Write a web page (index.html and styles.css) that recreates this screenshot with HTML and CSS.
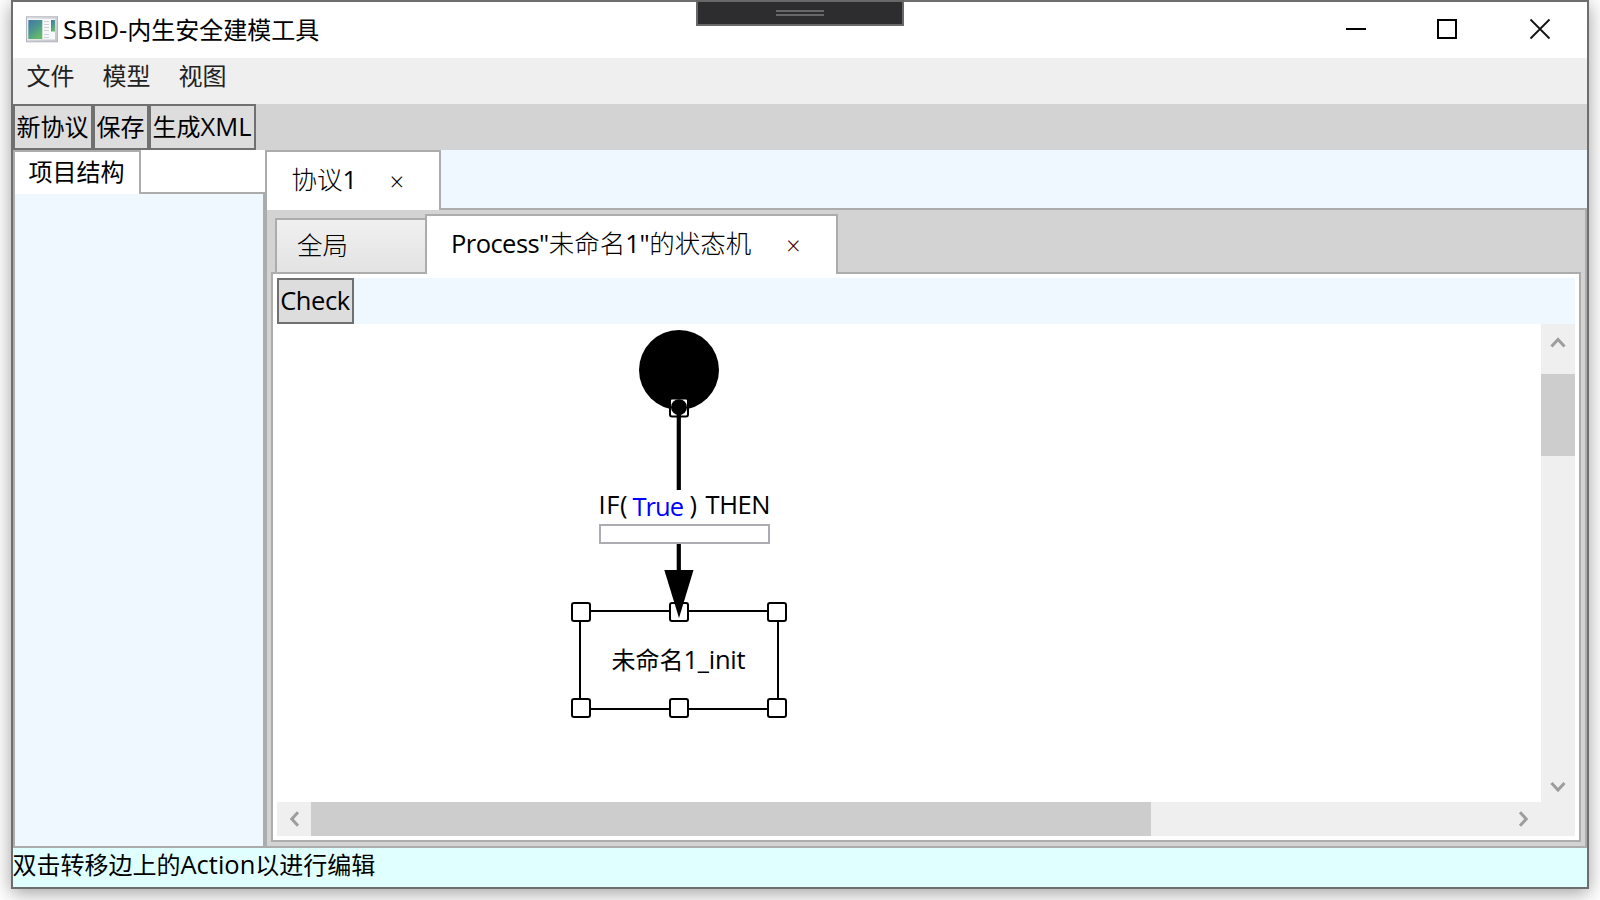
FILE: index.html
```html
<!DOCTYPE html>
<html lang="zh-CN">
<head>
<meta charset="utf-8">
<title>SBID</title>
<link rel="stylesheet" href="styles.css">
</head>
<body>
<div class="window">
  <header class="titlebar">
    <svg class="app-icon" width="32" height="28" viewBox="0 0 32 28">
      <defs>
        <linearGradient id="ig" x1="0" y1="0" x2=".6" y2="1"><stop offset="0" stop-color="#4677a4"/><stop offset=".5" stop-color="#4a9590"/><stop offset="1" stop-color="#68b96b"/></linearGradient>
        <linearGradient id="fr" x1="0" y1="0" x2="1" y2="1"><stop offset="0" stop-color="#e8eaee"/><stop offset="1" stop-color="#c3c5ca"/></linearGradient>
      </defs>
      <rect x=".5" y=".8" width="31" height="25" fill="url(#fr)" stroke="#b1b5bc"/>
      <rect x="1.500" y="3" width="27.500" height="20.500" fill="#f7f8f9"/>
      <rect x="2.300" y="4" width="14" height="19" fill="url(#ig)"/>
      <rect x="25" y="4" width="4" height="11.500" fill="url(#ig)"/>
      <path d="M18 5.500h5M18 8.500h5M18 11.500h5M18 14.500h5M18 18.500h5M18 21.500h5" stroke="#cfd1d6" stroke-width="1.200"/>
    </svg>
    <span class="title"><span class="la la-title">SBID-</span>内生安全建模工具</span>
    <div class="grip"><i></i><i></i></div>
    <svg class="winctl" width="210" height="30" viewBox="0 0 210 30">
      <path d="M2 15h20" stroke="#000" stroke-width="2"/>
      <rect x="94" y="6" width="18" height="18" fill="none" stroke="#000" stroke-width="2"/>
      <path d="M186.500 5.500l19 19M205.500 5.500l-19 19" stroke="#111" stroke-width="1.800"/>
    </svg>
  </header>
  <nav class="menu"><span>文件</span><span>模型</span><span>视图</span></nav>
  <div class="toolbar">
    <button class="btn b1">新协议</button><button class="btn b2">保存</button><button class="btn b3">生成<span class="la la-xml">XML</span></button>
  </div>
  <main class="main">
    <aside class="side">
      <div class="side-head"><div class="side-tab">项目结构</div></div>
      <div class="side-body"></div>
    </aside>
    <section class="docs">
      <div class="doc-head"><div class="doc-tab"><span class="big">协议<span class="la">1</span></span><span class="x">×</span></div><div class="doc-fill"></div></div>
      <div class="doc-body">
        <div class="tabs">
          <div class="tab"><span class="big all">全局</span></div>
          <div class="tab sel"><span class="big"><span class="la la-proc">Process"</span>未命名<span class="la la-q">1"</span>的状态机</span><span class="x">×</span></div>
        </div>
        <div class="pane">
          <div class="pane-bar"><button class="btn check"><span class="la la-check">Check</span></button></div>
          <div class="view">
            <div class="canvas">
              <svg class="graph" width="1264" height="478" viewBox="277 324 1264 478">
                <circle cx="679" cy="370" r="40"/>
                <rect class="port" x="670" y="398.500" width="18" height="18" rx="2"/>
                <circle cx="679" cy="407.200" r="8"/>
                <path d="M678.800 407V572" stroke="#000" stroke-width="4.200"/>
                <rect x="598" y="490" width="173" height="54" fill="#fff"/>
                <rect x="600" y="525" width="169" height="18" fill="#fff" stroke="#acacb2" stroke-width="2"/>
                <rect x="580" y="611" width="198" height="98" fill="#fff" stroke="#000" stroke-width="2"/>
                <rect class="port" x="572" y="603" width="18" height="18" rx="2"/>
                <rect class="port" x="670" y="603" width="18" height="18" rx="2"/>
                <rect class="port" x="768" y="603" width="18" height="18" rx="2"/>
                <rect class="port" x="572" y="699" width="18" height="18" rx="2"/>
                <rect class="port" x="670" y="699" width="18" height="18" rx="2"/>
                <rect class="port" x="768" y="699" width="18" height="18" rx="2"/>
                <path d="M664.300 570h29.200L679 618z"/>
                <text class="gt" x="598.500" y="514" textLength="29">IF(</text>
                <text class="gt blue" x="632.500" y="516" textLength="51.500">True</text>
                <text class="gt" x="689.500" y="514" textLength="8">)</text>
                <text class="gt" x="705.500" y="514" textLength="65">THEN</text>
                <text class="gc" x="611.500" y="669">未命名</text>
                <text class="gt" x="683.500" y="669" textLength="62">1_init</text>
              </svg>
            </div>
            <div class="vbar">
              <svg width="34" height="50" viewBox="0 0 34 50"><path d="M10.500 22.500l6.500-7 6.500 7"/></svg>
              <div class="vthumb"></div>
              <svg class="end" width="34" height="34" viewBox="0 0 34 34"><path d="M10.500 15l6.500 7 6.500-7"/></svg>
            </div>
          </div>
          <div class="hbar">
            <svg width="34" height="34" viewBox="0 0 34 34"><path d="M21 10.200l-6.200 6.800 6.200 6.800"/></svg>
            <div class="hthumb"></div>
            <svg class="endh" width="34" height="34" viewBox="0 0 34 34"><path d="M13 10.200l6.200 6.800-6.200 6.800"/></svg>
          </div>
        </div>
      </div>
    </section>
  </main>
  <footer class="status">双击转移边上的<span class="la la-act">Action</span>以进行编辑</footer>
</div>
</body>
</html>
```
FILE: styles.css
```css
* { box-sizing: border-box; }
html, body { margin: 0; height: 100%; overflow: hidden; }
body {
  background: #fff;
  font-family: "Noto Sans CJK SC", sans-serif;
  font-size: 24px;
  color: #000;
  padding: 0 11px 11px;
}
.window {
  height: 889px;
  border: 2px solid #6e6e6e;
  box-shadow: 0 4px 18px rgba(0,0,0,.38);
  display: flex;
  flex-direction: column;
  background: #fff;
  white-space: nowrap;
}
.la { font-family: "Open Sans", "Noto Sans", sans-serif; font-size: 25.5px; line-height: 1; letter-spacing: -.4px; }
.la-title { letter-spacing: 0; }
.la-xml { letter-spacing: 0; }
.la-act { letter-spacing: 0; }
.titlebar { height: 56px; display: flex; align-items: center; padding: 0 16px 0 13px; position: relative; }
.app-icon { margin: 0 5px 0 0; }
.title { line-height: 53px; height: 56px; }
.grip {
  position: absolute; left: 683px; top: -2px; width: 208px; height: 26px;
  background: #2d2d30; border: 2px solid #686868;
  display: flex; flex-direction: column; align-items: center; gap: 2px; padding-top: 8px;
}
.grip i { width: 48px; height: 2px; background: #686868; }
.winctl { margin-left: auto; margin-right: 17px; margin-bottom: 2px; }
.menu { height: 46px; background: #efefef; display: flex; gap: 28px; padding-left: 13.5px; line-height: 33px; color: #222; }
.toolbar { height: 46px; background: #d3d3d3; display: flex; }
.btn {
  font: inherit; color: #000; background: #ddd; border: 2px solid #707070; border-radius: 0;
  height: 46px; padding: 0 1px 2px 0; margin: 0; line-height: 40px; text-align: center; white-space: nowrap;
}
.b1 { width: 80px; }
.b2 { width: 56px; }
.b3 { width: 107px; }
.check { width: 77px; }
.main { height: 698px; display: flex; }
.side { width: 252px; display: flex; flex-direction: column; }
.side-head { height: 44px; border-bottom: 2px solid #acacac; background: #fff; }
.side-tab { width: 128px; height: 44px; border: 2px solid #acacac; border-bottom: 0; background: #fff; padding-left: 13.5px; line-height: 37px; }
.side-body { flex: 1; background: #eff7ff; border: 2px solid #acacac; border-top: 0; }
.docs { flex: 1; display: flex; flex-direction: column; }
.doc-head { height: 60px; display: flex; }
.doc-tab { width: 176px; height: 60px; border: 2px solid #acacac; border-bottom: 0; background: #fff; display: flex; padding-left: 24.5px; line-height: 51px; }
.doc-fill { flex: 1; height: 60px; background: #eff7ff; border-bottom: 2px solid #acacac; }
.big { font-size: 25.5px; font-weight: 300; }
.big .la { font-weight: 400; }
.x { font-family: "Open Sans", sans-serif; font-weight: 300; font-size: 25px; }
.doc-tab .x { margin-left: 33px; line-height: 59px; }
.doc-body { flex: 1; background: #d3d3d3; border: 2px solid #acacac; border-top: 0; padding: 4px; display: flex; flex-direction: column; }
.tabs { height: 60px; display: flex; align-items: flex-end; padding-left: 4px; margin-bottom: -2px; position: relative; }
.tab { width: 152px; height: 56px; margin-right: -2px; border: 2px solid #acacac; background: linear-gradient(#f0f0f0, #e3e3e3); padding-left: 20px; line-height: 48px; display: flex; }
.tab.sel { width: 413px; height: 60px; background: #fff; border-bottom: 0; padding-left: 24px; line-height: 51px; }
.la-proc { letter-spacing: -.55px; }
.sel .x { margin-left: 35px; line-height: 59px; color: #400; }
.pane { flex: 1; background: #fff; border: 2px solid #acacac; padding: 4px; display: flex; flex-direction: column; }
.pane-bar { height: 46px; background: #eff7ff; display: flex; }
.view { height: 478px; display: flex; }
.canvas { flex: 1; }
.graph { display: block; }
.port { fill: #fff; stroke: #000; stroke-width: 2; }
.gt { font: 25.5px "Open Sans", "Noto Sans", sans-serif; }
.gc { font: 24px "Noto Sans CJK SC", sans-serif; }
.blue { fill: #00f; }
.vbar { width: 34px; background: #efefef; display: flex; flex-direction: column; }
.vbar svg, .hbar svg { display: block; fill: none; stroke: #9d9d9d; stroke-width: 3; }
.vthumb { height: 82px; background: #cdcdcd; }
.end { margin-top: auto; }
.hbar { height: 34px; background: #efefef; display: flex; }
.hthumb { width: 840px; background: #cdcdcd; }
.hbar .endh { margin-left: auto; margin-right: 34px; }
.status { height: 39px; background: #e0ffff; line-height: 31px; text-indent: -.5px; }
```
